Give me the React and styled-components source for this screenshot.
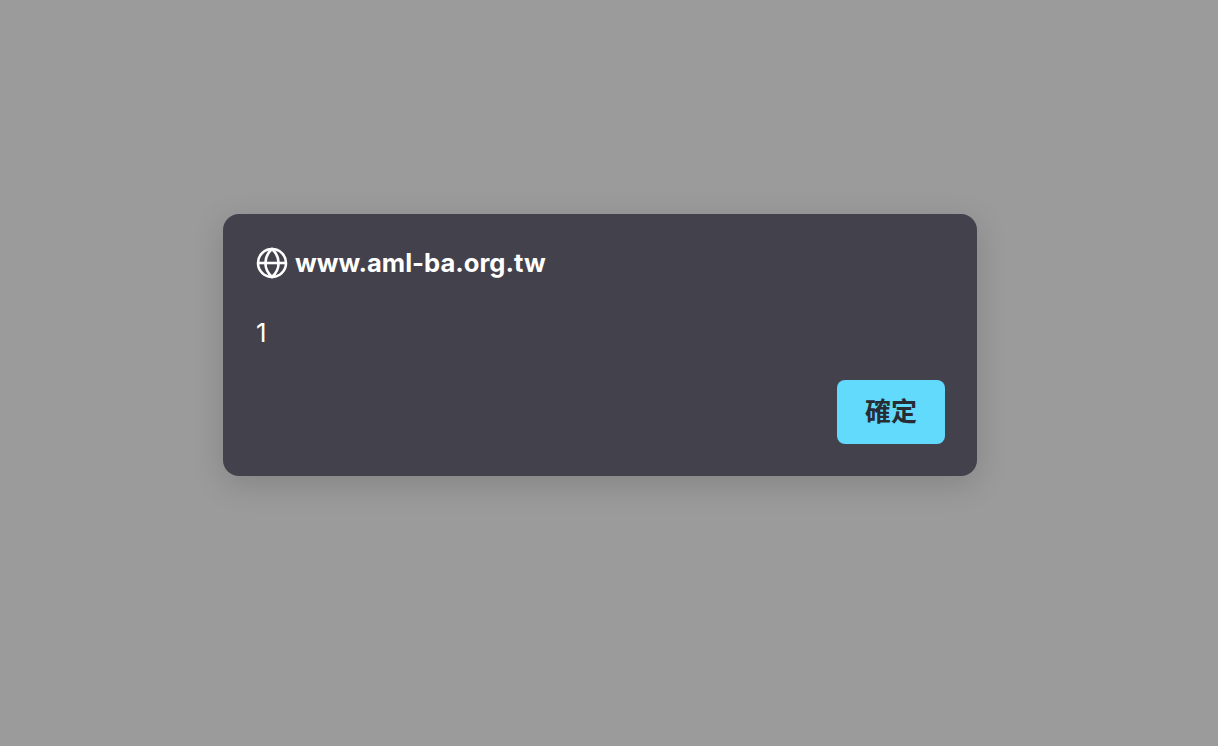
import React from 'react'
import styled, { createGlobalStyle } from 'styled-components'

const GlobalStyle = createGlobalStyle`
    html, body {
        margin: 0;
        padding: 0;
        height: 100%;
    }
    #root {
        height: 100%;
    }
`

function GlobeIcon() {
    return (
        <Globe viewBox="0 0 32 32" fill="none" stroke="currentColor" strokeWidth="2.6">
            <circle cx="16" cy="16" r="14" />
            <path d="M16 2C11.600 6 9.400 10.600 9.400 16s2.200 10 6.600 14C20.400 26 22.600 21.400 22.600 16S20.400 6 16 2Z" />
            <path d="M2 16h28" />
        </Globe>
    )
}

export default function App() {
    return (
        <Backdrop>
            <GlobalStyle />
            <Dialog>
                <Header>
                    <GlobeIcon />
                    <Title>www.aml-ba.org.tw</Title>
                </Header>
                <Message>1</Message>
                <Footer>
                    <ConfirmButton>確定</ConfirmButton>
                </Footer>
            </Dialog>
        </Backdrop>
    )
}

const Backdrop = styled.div`
    height: 100%;
    min-height: 746px;
    box-sizing: border-box;
    background: #9b9b9c;
    padding-top: 214px;
    font-family: Inter, "Liberation Sans", "Noto Sans CJK TC", sans-serif;
`

const Dialog = styled.div`
    width: 754px;
    height: 262px;
    box-sizing: border-box;
    margin-left: 223px;
    padding: 32px 32px 32px 33px;
    border-radius: 16px;
    background: #43414b;
    color: #fff;
    box-shadow: 0 8px 32px rgba(0, 0, 0, 0.15);
    display: flex;
    flex-direction: column;
`

const Header = styled.div`
    display: flex;
    align-items: center;
    gap: 7px;
    height: 34px;
`

const Globe = styled.svg`
    width: 32px;
    height: 32px;
    flex-shrink: 0;
`

const Title = styled.div`
    font-size: 25.6px;
    font-weight: 700;
    line-height: 34px;
`

const Message = styled.div`
    margin-top: 38px;
    font-size: 26px;
    line-height: 30px;
`

const Footer = styled.div`
    margin-top: auto;
    display: flex;
    justify-content: flex-end;
`

const ConfirmButton = styled.button`
    width: 108px;
    height: 64px;
    padding: 0 0 6px;
    border: 0;
    border-radius: 8px;
    background: #61dafb;
    color: #282c34;
    font-family: inherit;
    font-size: 26px;
    font-weight: 700;
`
